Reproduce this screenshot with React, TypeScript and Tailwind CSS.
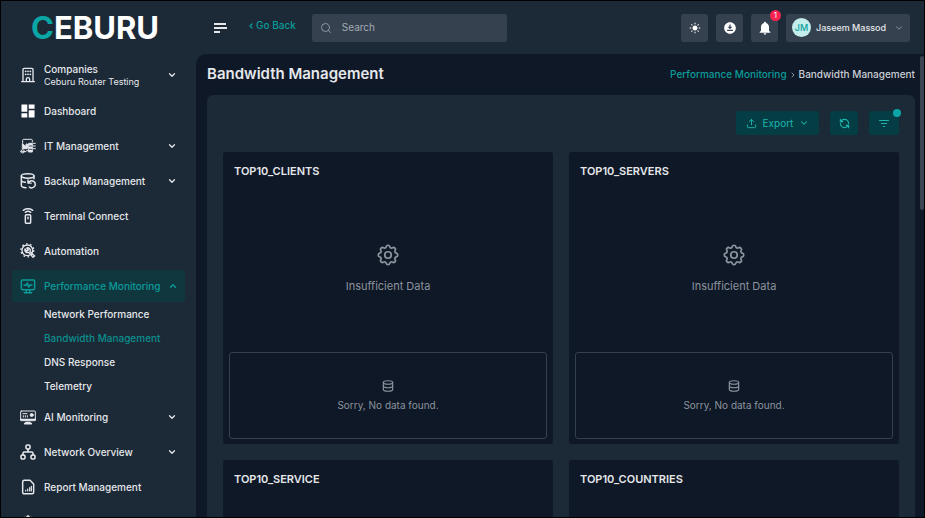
import React, { useState } from "react";
import { ChevronDown, ChevronLeft, ChevronRight, ChevronUp, RefreshCcw, Search, Upload } from "lucide-react";
import { MdDashboard, MdDownloadForOffline, MdLightMode, MdNotifications } from "react-icons/md";
import { TbDatabase, TbSettings } from "react-icons/tb";

function Glyph({ children, w = 1.8 }: { children: React.ReactNode; w?: number }) {
  return (
    <svg viewBox="0 0 24 24" className="h-4 w-4 shrink-0" fill="none" stroke="currentColor" strokeWidth={w} strokeLinecap="round" strokeLinejoin="round" aria-hidden="true">
      {children}
    </svg>
  );
}

const icons = {
  building: (
    <Glyph w={2}>
      <path d="M2.500 22h19M4.500 22V3.500c0-1 .5-1.500 1.500-1.500h12c1 0 1.500.5 1.500 1.500V22M9.500 22v-3.500c0-3.300 5-3.300 5 0V22" />
      <path d="M8.500 6.500h.1M12 6.500h.1M15.500 6.500h.1M8.500 11h.1M12 11h.1M15.500 11h.1" strokeWidth={2.6} />
    </Glyph>
  ),
  it: (
    <Glyph w={1.5}>
      <path d="M4 8V3.500C4 2.500 4.500 2 5.500 2H17c1 0 1.500.5 1.500 1.500V6M1 20.500h8" />
      <circle cx="4" cy="20" r="2.500" />
      <path d="M4 9l5 4V9h2v7H4zM13.500 8h5v13h-5z" fill="currentColor" />
      <path d="M11 12h3M20 8h3M20 12h3M20 16h3M10 19h4" />
      <path d="M14 12h4M14 17h4" stroke="#1c2936" strokeWidth={1.2} />
    </Glyph>
  ),
  backup: (
    <Glyph w={2.2}>
      <ellipse cx="11.500" cy="4.500" rx="9.500" ry="3.300" />
      <path d="M2 4.500v14c0 2 3 3.500 7 3.700M21 4.500v4M2 11c.5 1.700 3 2.600 6 3" />
      <path d="M12 10.500v4.700h4.700M12.500 15c1.500-3 5-4.200 8-2.300s3.200 6 .8 8-5.500 2-7.300.3" />
    </Glyph>
  ),
  terminal: (
    <Glyph w={2.2}>
      <rect x="8" y="10" width="8" height="13" rx="1.500" />
      <path d="M12 14v2M8 6.500c2.300-1.900 5.700-1.900 8 0M5 3.500c4-3.300 10-3.300 14 0" />
    </Glyph>
  ),
  automation: (
    <Glyph w={2}>
      <circle cx="11" cy="11" r="8" />
      <circle cx="11" cy="11" r="9.700" strokeWidth={2} strokeDasharray="2.500 3.580" strokeLinecap="butt" />
      <path d="M7.500 9a4 4 0 0 0 5.500 5l6.500 7.500 2.500-2-7-6.500a4 4 0 0 0-5-5.500l2.500 3-2 2z" />
    </Glyph>
  ),
  performance: (
    <Glyph w={2.2}>
      <rect x="2" y="3" width="20" height="14.500" rx="2" />
      <path d="M9.500 18v4M14.500 18v4M6.500 22h11M6 11h3l2-3.500 2 6 2-3h3" />
    </Glyph>
  ),
  ai: (
    <Glyph w={1.5}>
      <rect x="1" y="3" width="22" height="14.500" rx="1" />
      <path d="M1 16h22M9 20.500h6M7 22h10" strokeWidth={2.4} />
      <path d="M4.500 7h6M5 12v-2M8 12v-2M11 12v-2" />
      <circle cx="17.500" cy="9" r="2.300" fill="currentColor" />
    </Glyph>
  ),
  network: (
    <Glyph w={2.4}>
      <rect x="9" y="1.500" width="6" height="6" rx="2" />
      <rect x="1.500" y="16.500" width="6" height="6" rx="2" />
      <rect x="16.500" y="16.500" width="6" height="6" rx="2" />
      <path d="M12 7.500V12M4.500 16.500V14c0-1.500.5-2 2-2h11c1.500 0 2 .5 2 2v2.500" />
    </Glyph>
  ),
  report: (
    <Glyph w={2.2}>
      <path d="M6.500 2h8.500l5.500 5.500V20c0 1.500-.8 2.200-2.200 2.200H6.500c-1.700 0-2.500-.8-2.500-2.500V4.500C4 2.800 4.800 2 6.500 2z" />
      <path d="M8.500 18v-1M11.500 18v-3M14.500 18v-5M17 18v-7" strokeWidth={1.8} />
    </Glyph>
  ),
};

type Item = { label: string; icon: React.ReactNode; expandable?: boolean };

const menu: Item[] = [
  { label: "Dashboard", icon: <MdDashboard viewBox="1 1 22 22" className="h-4 w-4 shrink-0 text-white" /> },
  { label: "IT Management", icon: icons.it, expandable: true },
  { label: "Backup Management", icon: icons.backup, expandable: true },
  { label: "Terminal Connect", icon: icons.terminal },
  { label: "Automation", icon: icons.automation },
];

const subMenu = ["Network Performance", "Bandwidth Management", "DNS Response", "Telemetry"];

const lowerMenu: Item[] = [
  { label: "AI Monitoring", icon: icons.ai, expandable: true },
  { label: "Network Overview", icon: icons.network, expandable: true },
  { label: "Report Management", icon: icons.report },
  { label: "Settings", icon: <TbSettings className="h-4 w-4 shrink-0" />, expandable: true },
];

function NavItem({ label, icon, expandable }: Item) {
  const content = (
    <>
      {icon}
      <span className="flex-1 text-left">{label}</span>
      {expandable && <ChevronDown className="h-2.5 w-2.5" strokeWidth={3} />}
    </>
  );
  const cls = "flex h-8 w-full shrink-0 items-center gap-2 px-2 hover:text-white";
  return expandable ? <button type="button" className={cls}>{content}</button> : <a href="#" className={cls}>{content}</a>;
}

function Sidebar() {
  const [open, setOpen] = useState(true);

  return (
    <aside className="flex w-[195px] shrink-0 flex-col pl-[11px] pr-[11px] text-[10px] font-medium text-[#e5e8ec]">
      <div className="flex h-[57px] shrink-0 items-center pb-1 pl-[19px] text-[31px] font-bold leading-none text-white">
        <span className="text-[#0aa5a5]">C</span>EBURU
      </div>
      <nav className="flex min-h-0 flex-1 flex-col gap-[3px] overflow-y-auto [scrollbar-width:none]">
        <button type="button" className="flex h-[34px] shrink-0 items-center gap-2 px-2 text-left">
          {icons.building}
          <span className="flex-1">
            <span className="block leading-[13px]">Companies</span>
            <span className="block text-[9px] font-normal leading-3">Ceburu Router Testing</span>
          </span>
          <ChevronDown className="h-2.5 w-2.5" strokeWidth={3} />
        </button>
        {menu.map((item) => <NavItem key={item.label} {...item} />)}
        <div className="shrink-0">
          <button
            type="button"
            onClick={() => setOpen(!open)}
            className="flex h-8 w-full items-center gap-2 rounded-[3px] bg-[#10363e] px-2 text-[#0b9c9a]"
          >
            {icons.performance}
            <span className="flex-1 whitespace-nowrap text-left">Performance Monitoring</span>
            {open ? <ChevronUp className="h-2.5 w-2.5 shrink-0" strokeWidth={3} /> : <ChevronDown className="h-2.5 w-2.5 shrink-0" strokeWidth={3} />}
          </button>
          {open && (
            <ul className="pl-8">
              {subMenu.map((label) => (
                <li key={label}>
                  <a href="#" className={`flex h-6 items-center ${label === "Bandwidth Management" ? "text-[#0b8f8e]" : ""}`}>{label}</a>
                </li>
              ))}
            </ul>
          )}
        </div>
        {lowerMenu.map((item) => <NavItem key={item.label} {...item} />)}
      </nav>
    </aside>
  );
}

function Header() {
  const iconButton = "relative flex h-7 w-[27px] items-center justify-center rounded-[3px] bg-[#35414e] text-white";

  return (
    <header className="flex h-[53px] shrink-0 items-center pl-[18px] pr-3.5">
      <button type="button" aria-label="Toggle menu">
        <svg viewBox="0 0 14 12" className="h-3 w-3.5" fill="none" stroke="#e5e7eb" strokeWidth="2">
          <path d="M0 2h12M0 6h13M0 10h6" />
        </svg>
      </button>
      <a href="#" className="mb-1 ml-[19px] flex items-center gap-px text-[10px] font-medium text-[#0b9c9a]">
        <ChevronLeft className="h-2 w-2" strokeWidth={4} />Go Back
      </a>
      <label className="ml-4 flex h-7 w-[195px] items-center gap-2.5 rounded-[3px] bg-[#35414e] px-2">
        <Search className="h-3 w-3 text-[#8f98a3]" />
        <input type="text" aria-label="Search" placeholder="Search" className="min-w-0 flex-1 bg-transparent text-[10px] text-white outline-none placeholder:text-[#a3abb5]" />
      </label>
      <div className="ml-auto flex items-center gap-2">
        <button type="button" aria-label="Theme" className={iconButton}><MdLightMode className="h-3 w-3" /></button>
        <button type="button" aria-label="Downloads" className={iconButton}><MdDownloadForOffline className="h-3.5 w-3.5" /></button>
        <button type="button" aria-label="Notifications" className={iconButton}>
          <MdNotifications className="h-4 w-4" />
          <span className="absolute -right-[3px] -top-1 flex h-[11px] w-[11px] items-center justify-center rounded-full bg-[#fb2350] text-[8px] leading-none">1</span>
        </button>
        <button type="button" className="flex h-7 w-[124px] items-center rounded-[3px] bg-[#35414e] pl-1.5 pr-1.5 text-[9px] font-medium text-[#e5e7eb]">
          <span className="mr-[5px] flex h-[19px] w-[19px] shrink-0 items-center justify-center rounded-full bg-[#c3eeec] text-[9px] text-[#0ba19f]">JM</span>
          <span className="whitespace-nowrap">Jaseem Massod</span>
          <ChevronDown className="ml-auto h-2.5 w-2.5 shrink-0 text-[#9aa3ad]" />
        </button>
      </div>
    </header>
  );
}

function TopCard({ title }: { title: string }) {
  return (
    <section className="flex flex-col rounded-[3px] bg-[#0f1826] px-1.5 pb-[5px]">
      <h2 className="px-[5px] pt-3 text-[11px] font-semibold leading-[14px] text-[#e5e7eb]">{title}</h2>
      <div className="flex h-[174px] flex-col items-center justify-center gap-2.5 pt-1.5 text-[#8b939e]">
        <TbSettings className="h-[26px] w-[26px]" strokeWidth={1.6} />
        <p className="text-[11px] leading-4">Insufficient Data</p>
      </div>
      <div className="flex h-[87px] flex-col items-center justify-center gap-1 rounded-[3px] border border-[#34404c] text-[#8b939e]">
        <TbDatabase className="h-3.5 w-3.5" />
        <p className="text-[10px] leading-4">Sorry, No data found.</p>
      </div>
    </section>
  );
}

export default function App() {
  const action = "relative flex h-6 items-center justify-center rounded-[3px] bg-[#043e44] text-[#1fb5ae]";

  return (
    <div className="flex h-screen overflow-hidden border border-black bg-[#1c2936] font-['Inter',sans-serif]">
      <Sidebar />
      <div className="flex min-w-0 flex-1 flex-col">
        <Header />
        <main className="flex min-h-0 flex-1 overflow-hidden rounded-tl-[10px] bg-[#0f1826]">
          <div className="min-w-0 flex-1 overflow-y-auto pl-[11px] pr-[5px] [scrollbar-width:none]">
            <div className="flex h-[41px] items-center justify-between">
              <h1 className="text-[15px] font-semibold text-[#e5e7eb]">Bandwidth Management</h1>
              <nav aria-label="Breadcrumb" className="flex items-center gap-0.5 text-[10px] font-medium">
                <a href="#" className="text-[#0b9c9a]">Performance Monitoring</a>
                <ChevronRight className="h-2 w-2 text-[#8b939e]" strokeWidth={3} />
                <span className="text-[#c9ced5]">Bandwidth Management</span>
              </nav>
            </div>
            <div className="rounded-md bg-[#1c2936] p-4">
              <div className="mb-[17px] flex justify-end gap-[11px]">
                <button type="button" className={`${action} w-[83px] gap-1.5 text-[10px]`}>
                  <Upload className="h-[11px] w-[11px]" />
                  Export
                  <ChevronDown className="h-2.5 w-2.5" strokeWidth={2.5} />
                </button>
                <button type="button" aria-label="Refresh" className={`${action} w-7`}><RefreshCcw className="h-[11px] w-[11px]" strokeWidth={2.5} /></button>
                <button type="button" aria-label="Filter" className={`${action} w-[30px]`}>
                  <svg viewBox="0 0 12 12" className="h-3 w-3" fill="none" stroke="currentColor" strokeWidth="1.200" strokeLinecap="round">
                    <path d="M1.500 3.500h9M3.500 6.500h5M5.500 9.500h1" />
                  </svg>
                  <span className="absolute -right-0.5 -top-0.5 h-2 w-2 rounded-full bg-[#0ba5a5]" />
                </button>
              </div>
              <div className="grid grid-cols-2 gap-4">
                <TopCard title="TOP10_CLIENTS" />
                <TopCard title="TOP10_SERVERS" />
                <TopCard title="TOP10_SERVICE" />
                <TopCard title="TOP10_COUNTRIES" />
              </div>
            </div>
          </div>
          <div className="w-1 shrink-0 pt-0.5">
            <div className="h-1/3 rounded-full bg-[#3b4652]" />
          </div>
        </main>
      </div>
    </div>
  );
}
